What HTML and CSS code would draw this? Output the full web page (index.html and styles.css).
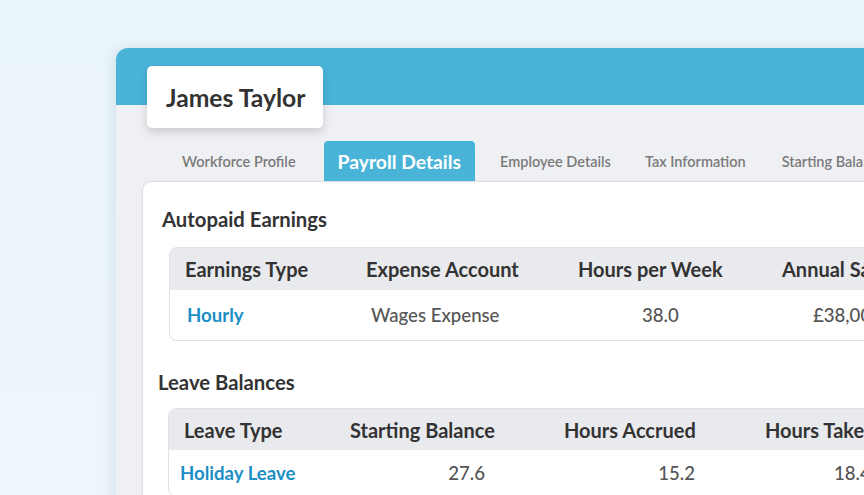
FILE: index.html
```html
<!DOCTYPE html>
<html lang="en">
<head>
<meta charset="utf-8">
<title>James Taylor - Payroll Details</title>
<link rel="stylesheet" href="styles.css">
</head>
<body>
<div class="window">
  <div class="topbar">
    <div class="namecard">James Taylor</div>
  </div>
  <nav class="tabs">
    <span class="tab t1">Workforce Profile</span>
    <span class="tab t2 active">Payroll Details</span>
    <span class="tab t3">Employee Details</span>
    <span class="tab t4">Tax Information</span>
    <span class="tab t5">Starting Balances</span>
  </nav>
  <main class="card">
    <h2 class="section-title">Autopaid Earnings</h2>
    <div class="table earnings">
      <div class="thead">
        <span class="th c1">Earnings Type</span>
        <span class="th c2">Expense Account</span>
        <span class="th c3">Hours per Week</span>
        <span class="th c4">Annual Salary</span>
      </div>
      <div class="trow">
        <span class="td link c1">Hourly</span>
        <span class="td c2">Wages Expense</span>
        <span class="td c3">38.0</span>
        <span class="td c4">£38,000.00</span>
      </div>
    </div>
    <h2 class="section-title leave-title">Leave Balances</h2>
    <div class="table leave">
      <div class="thead">
        <span class="th c1">Leave Type</span>
        <span class="th c2">Starting Balance</span>
        <span class="th c3">Hours Accrued</span>
        <span class="th c4">Hours Taken</span>
      </div>
      <div class="trow">
        <span class="td link c1">Holiday Leave</span>
        <span class="td c2">27.6</span>
        <span class="td c3">15.2</span>
        <span class="td c4">18.4</span>
      </div>
    </div>
  </main>
</div>
</body>
</html>
```

FILE: styles.css
```css
* { box-sizing: border-box; }
html, body { margin: 0; padding: 0; }
body {
  width: 864px;
  height: 495px;
  overflow: hidden;
  background: linear-gradient(180deg, #eaf5fb 0%, #eef6fb 100%);
  font-family: Lato, "Open Sans", sans-serif;
  color: #333;
}
.window {
  margin: 48px 0 0 116px;
  width: 800px;
  height: 520px;
  background: #eff0f4;
  border-radius: 12px 0 0 0;
  box-shadow: -4px 0 12px rgba(120, 150, 170, 0.18);
  overflow: hidden;
}
.topbar {
  height: 57px;
  background: #4ab4d8;
  padding: 18px 0 0 31px;
}
.namecard {
  width: 176px;
  height: 62px;
  background: #fff;
  border-radius: 5px;
  box-shadow: 0 4px 10px rgba(0, 0, 0, 0.16);
  font-size: 24.7px;
  font-weight: 700;
  color: #333;
  display: flex;
  align-items: center;
  padding-left: 19px;
  position: relative;
  z-index: 2;
}
.tabs {
  display: flex;
  align-items: stretch;
  margin-top: 36px;
  height: 40px;
  padding-left: 66px;
  white-space: nowrap;
}
.tab {
  display: flex;
  align-items: center;
  font-size: 14.5px;
  font-weight: 600;
  color: #7b7b7b;
}
.t2 { margin-left: 28px; }
.t3 { margin-left: 25px; }
.t4 { margin-left: 34px; }
.t5 { margin-left: 36px; }
.tab.active {
  background: #4ab4d8;
  color: #fff;
  font-size: 19.3px;
  font-weight: 700;
  padding: 0 14px;
  border-radius: 4px 4px 0 0;
}
.card {
  display: block;
  margin-left: 26px;
  height: 400px;
  background: #fff;
  border: 1px solid #dfe0e4;
  border-radius: 10px 0 0 0;
  padding: 25px 0 0 19px;
  box-shadow: 0 0 3px rgba(0, 0, 0, 0.05);
}
.section-title {
  margin: 0;
  font-size: 20.3px;
  line-height: 24px;
  font-weight: 700;
  color: #333;
}
.table {
  width: 760px;
  border: 1px solid #dfe1e5;
  border-radius: 8px;
  overflow: hidden;
}
.earnings { margin: 16px 0 0 7px; }
.leave-title { margin: 29px 0 0 -4px; }
.leave { margin: 14px 0 0 6px; }
.thead, .trow {
  display: grid;
  grid-template-columns: 181px 212px 204px 1fr;
  align-items: center;
  white-space: nowrap;
}
.thead {
  height: 42px;
  background: #e9eaee;
}
.trow { height: 50px; }
.th {
  font-size: 20px;
  font-weight: 700;
  color: #333;
  padding-left: 15px;
}
.td {
  font-size: 18.6px;
  font-weight: 500;
  color: #555;
}
.link { color: #1b8fc6; font-weight: 700; }
.earnings .td.c1 { padding-left: 17px; }
.earnings .td.c2 { padding-left: 20px; }
.earnings .td.c3 { padding-left: 79px; }
.earnings .td.c4 { padding-left: 46px; }
.leave .thead { grid-template-columns: 166px 214px 201px 1fr; height: 41px; }
.leave .trow { grid-template-columns: 181px 135px 210px 1fr; height: 46px; }
.leave .td.c1 { padding-left: 11px; }
.leave .td.c2, .leave .td.c3 { text-align: right; }
.leave .td.c4 { padding-left: 139px; }
```
